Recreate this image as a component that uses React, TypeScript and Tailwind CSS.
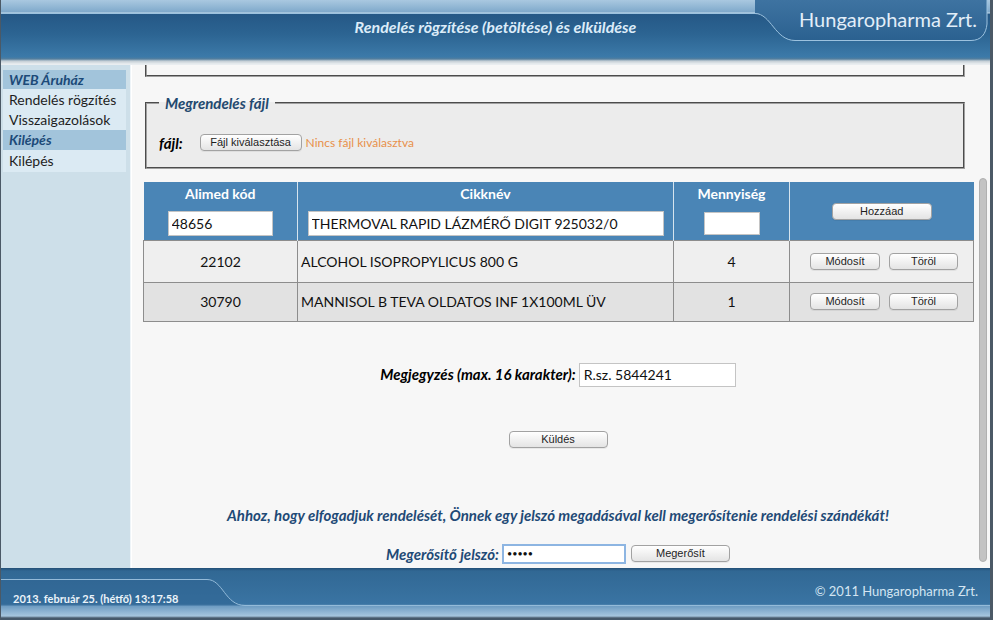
import React from 'react';

function Btn({children, className}: {children: React.ReactNode; className: string}) {
    return (
        <button
            className={`h-[17px] rounded-[4px] border border-[#a2a2a2] bg-gradient-to-b from-white to-[#e4e4e4] text-[11px] leading-none text-[#1e1e1e] font-['Liberation_Sans',sans-serif] shadow-[0_1px_0_rgba(0,0,0,0.06)] ${className}`}
        >
            {children}
        </button>
    );
}

function Header() {
    return (
        <header className="relative h-[65px] shrink-0 bg-[linear-gradient(to_bottom,#a9c8e0_0px,#7fa9cb_12px,#c6dcec_13px,#255886_14px,#2c6492_34px,#3c7aa9_57px,#557f9e_59px,#c3cdd4_61px,#e9edf0_64px)]">
            <svg className="absolute inset-0 w-full h-full" viewBox="0 0 989 65" preserveAspectRatio="none">
                <defs>
                    <linearGradient id="tab" x1="0" y1="0" x2="0" y2="1">
                        <stop offset="0" stopColor="#3e73a1" />
                        <stop offset="1" stopColor="#2b6190" />
                    </linearGradient>
                </defs>
                <path d="M754 0 V13 C770 13 774 40 794 40 H970 C980 40 985 34 986 24 V0 Z" fill="url(#tab)" />
                <path d="M0 13.5 H754 C770 13.5 774 40.5 794 40.5 H970 C980 40.5 985 34 986 24 V0" fill="none" stroke="#9cc2df" strokeWidth="1" />
            </svg>
            <div className="relative pt-[18px] text-center text-[16px] leading-[17px] font-bold italic text-[#dcecf9]">
                Rendelés rögzítése (betöltése) és elküldése
            </div>
            <div className="absolute right-[13px] top-[7px] text-[20px] leading-[24px] text-[#e2eef8]">
                Hungaropharma Zrt.
            </div>
        </header>
    );
}

function Sidebar() {
    return (
        <aside className="w-[130px] shrink-0 bg-[#cddfe9] border-r border-[#eef4f8] pt-[5px]">
            <div className="ml-[2px] w-[123px] text-[14px]">
                <div className="h-[19px] bg-[#a2c4db] pl-[6px] leading-[19px] font-bold italic text-[#1c4a78]">WEB Áruház</div>
                <div className="bg-[#dbeaf3] pt-[1px] pb-[1px] text-[#1e1e1e]">
                    <div className="h-[20px] pl-[6px] leading-[20px]">Rendelés rögzítés</div>
                    <div className="h-[19px] pl-[6px] leading-[19px]">Visszaigazolások</div>
                </div>
                <div className="h-[20px] bg-[#a2c4db] pl-[6px] leading-[20px] font-bold italic text-[#1c4a78]">Kilépés</div>
                <div className="bg-[#dbeaf3] h-[22px] pl-[6px] leading-[22px] text-[#1e1e1e]">Kilépés</div>
            </div>
        </aside>
    );
}

const rows = [
    {code: '22102', name: 'ALCOHOL ISOPROPYLICUS 800 G', qty: '4', bg: 'bg-[#efefef]', h: 'h-[42px]'},
    {code: '30790', name: 'MANNISOL B TEVA OLDATOS INF 1X100ML ÜV', qty: '1', bg: 'bg-[#e2e2e2]', h: 'h-[39px]'},
];

function Main() {
    return (
        <main className="relative flex-1 bg-[#f7f7f7] border-l border-white overflow-hidden">
            <div className="w-[852px]">
                <div className="ml-[13px] w-[820px] h-[12px] border-2 border-t-0 [border-style:groove] border-[#a0a0a0]" />

                <fieldset className="ml-[13px] w-[820px] mt-[17px] border-2 [border-style:groove] border-[#a0a0a0] bg-[#ececec] px-[12px] pb-[14px]">
                    <legend className="px-[6px] text-[15px] leading-[18px] font-bold italic text-[#23496f]">Megrendelés fájl</legend>
                    <div className="flex items-center h-[21px] mt-[20px]">
                        <span className="text-[15px] leading-[18px] font-bold italic text-black">fájl:</span>
                        <Btn className="ml-[17px] w-[102px] text-[11.5px]">Fájl kiválasztása</Btn>
                        <span className="ml-[4px] text-[12px] text-[#e8904a]">Nincs fájl kiválasztva</span>
                    </div>
                </fieldset>

                <table className="ml-[11px] mt-[13px] w-[831px] border-collapse text-[14px] text-[#111]">
                    <thead>
                        <tr className="h-[58px] bg-[#4a85b6]">
                            <th className="w-[154px] border-r border-[#d6e4ee] align-top pt-[4px] font-normal">
                                <div className="text-[14px] leading-[16px] font-bold text-white">Alimed kód</div>
                                <input readOnly defaultValue="48656" className="mt-[9px] w-[105px] h-[25px] bg-white border border-[#c4c4c4] pl-[3px] text-[14px] text-[#111] outline-none" />
                            </th>
                            <th className="w-[376px] border-r border-[#d6e4ee] align-top pt-[4px] font-normal">
                                <div className="text-[14px] leading-[16px] font-bold text-white">Cikknév</div>
                                <input readOnly defaultValue="THERMOVAL RAPID LÁZMÉRŐ DIGIT 925032/0" className="mt-[9px] w-[356px] h-[25px] bg-white border border-[#c4c4c4] pl-[3px] text-[14px] text-[#111] outline-none" />
                            </th>
                            <th className="w-[116px] border-r border-[#d6e4ee] align-top pt-[4px] font-normal">
                                <div className="text-[14px] leading-[16px] font-bold text-white">Mennyiség</div>
                                <input readOnly defaultValue="" className="mt-[10px] w-[56px] h-[23px] bg-white border border-[#c4c4c4] outline-none" />
                            </th>
                            <th className="align-middle font-normal">
                                <Btn className="w-[100px] relative top-[-1px]">Hozzáad</Btn>
                            </th>
                        </tr>
                    </thead>
                    <tbody>
                        {rows.map(r => (
                            <tr key={r.code} className={`${r.h} ${r.bg}`}>
                                <td className="border border-[#8d8d8d] text-center">{r.code}</td>
                                <td className="border border-[#8d8d8d] pl-[3px]">{r.name}</td>
                                <td className="border border-[#8d8d8d] text-center">{r.qty}</td>
                                <td className="border border-[#8d8d8d]">
                                    <div className="flex justify-center gap-[9px] pl-[5px]">
                                        <Btn className="w-[70px]">Módosít</Btn>
                                        <Btn className="w-[69px]">Töröl</Btn>
                                    </div>
                                </td>
                            </tr>
                        ))}
                    </tbody>
                </table>

                <div className="mt-[41px] flex justify-center items-center">
                    <span className="text-[15px] font-bold italic text-black">Megjegyzés (max. 16 karakter):</span>
                    <input readOnly defaultValue="R.sz. 5844241" className="ml-[3px] w-[157px] h-[24px] bg-white border border-[#c4c4c4] pl-[4px] text-[14px] text-[#111] outline-none" />
                </div>

                <div className="mt-[44px] flex justify-center">
                    <Btn className="w-[99px]">Küldés</Btn>
                </div>

                <div className="mt-[58px] text-center text-[15px] leading-[18px] font-bold italic text-[#1f4a76]">
                    Ahhoz, hogy elfogadjuk rendelését, Önnek egy jelszó megadásával kell megerősítenie rendelési szándékát!
                </div>

                <div className="mt-[19px] flex justify-center items-center">
                    <span className="text-[15px] font-bold italic text-[#1f4a76]">Megerősítő jelszó:</span>
                    <input readOnly type="password" defaultValue="12345" className="ml-[3px] w-[124px] h-[20px] bg-white border-2 border-[#8db5e2] pl-[3px] text-[9px] text-[#111] outline-none" />
                    <Btn className="ml-[5px] w-[99px]">Megerősít</Btn>
                </div>
            </div>

            <div className="absolute right-[3px] top-[113px] bottom-[6px] w-[8px] rounded-full bg-[#c3c3c3] border border-[#b0b0b0]" />
        </main>
    );
}

function Footer() {
    return (
        <footer className="relative h-[52px] shrink-0 bg-[linear-gradient(to_bottom,#234f76_0px,#316894_3px,#3a74a3_36px,#6e9cc2_38px,#a6c6de_48px,#46596a_50px)]">
            <svg className="absolute inset-0 w-full h-full" viewBox="0 0 989 52" preserveAspectRatio="none">
                <path d="M0 11.5 H206 C222 11.5 224 37.5 244 37.5 H0 Z" fill="#2f6591" opacity="0.55" />
                <path d="M0 11.5 H206 C222 11.5 224 37.5 244 37.5 H989" fill="none" stroke="#94bbd9" strokeWidth="1" />
            </svg>
            <div className="relative flex justify-between px-[12px]">
                <span className="mt-[24px] text-[11px] leading-[14px] font-bold text-[#eaf3fa]">2013. február 25. (hétfő) 13:17:58</span>
                <span className="mt-[15px] text-[13px] leading-[16px] text-[#d3e5f2]">© 2011 Hungaropharma Zrt.</span>
            </div>
        </footer>
    );
}

export default function App() {
    return (
        <div className="w-[993px] h-[620px] flex flex-col overflow-hidden border-l border-r-[3px] border-[#4b5966] font-['Lato',sans-serif]">
            <Header />
            <div className="flex flex-1 min-h-0">
                <Sidebar />
                <Main />
            </div>
            <Footer />
        </div>
    );
}
